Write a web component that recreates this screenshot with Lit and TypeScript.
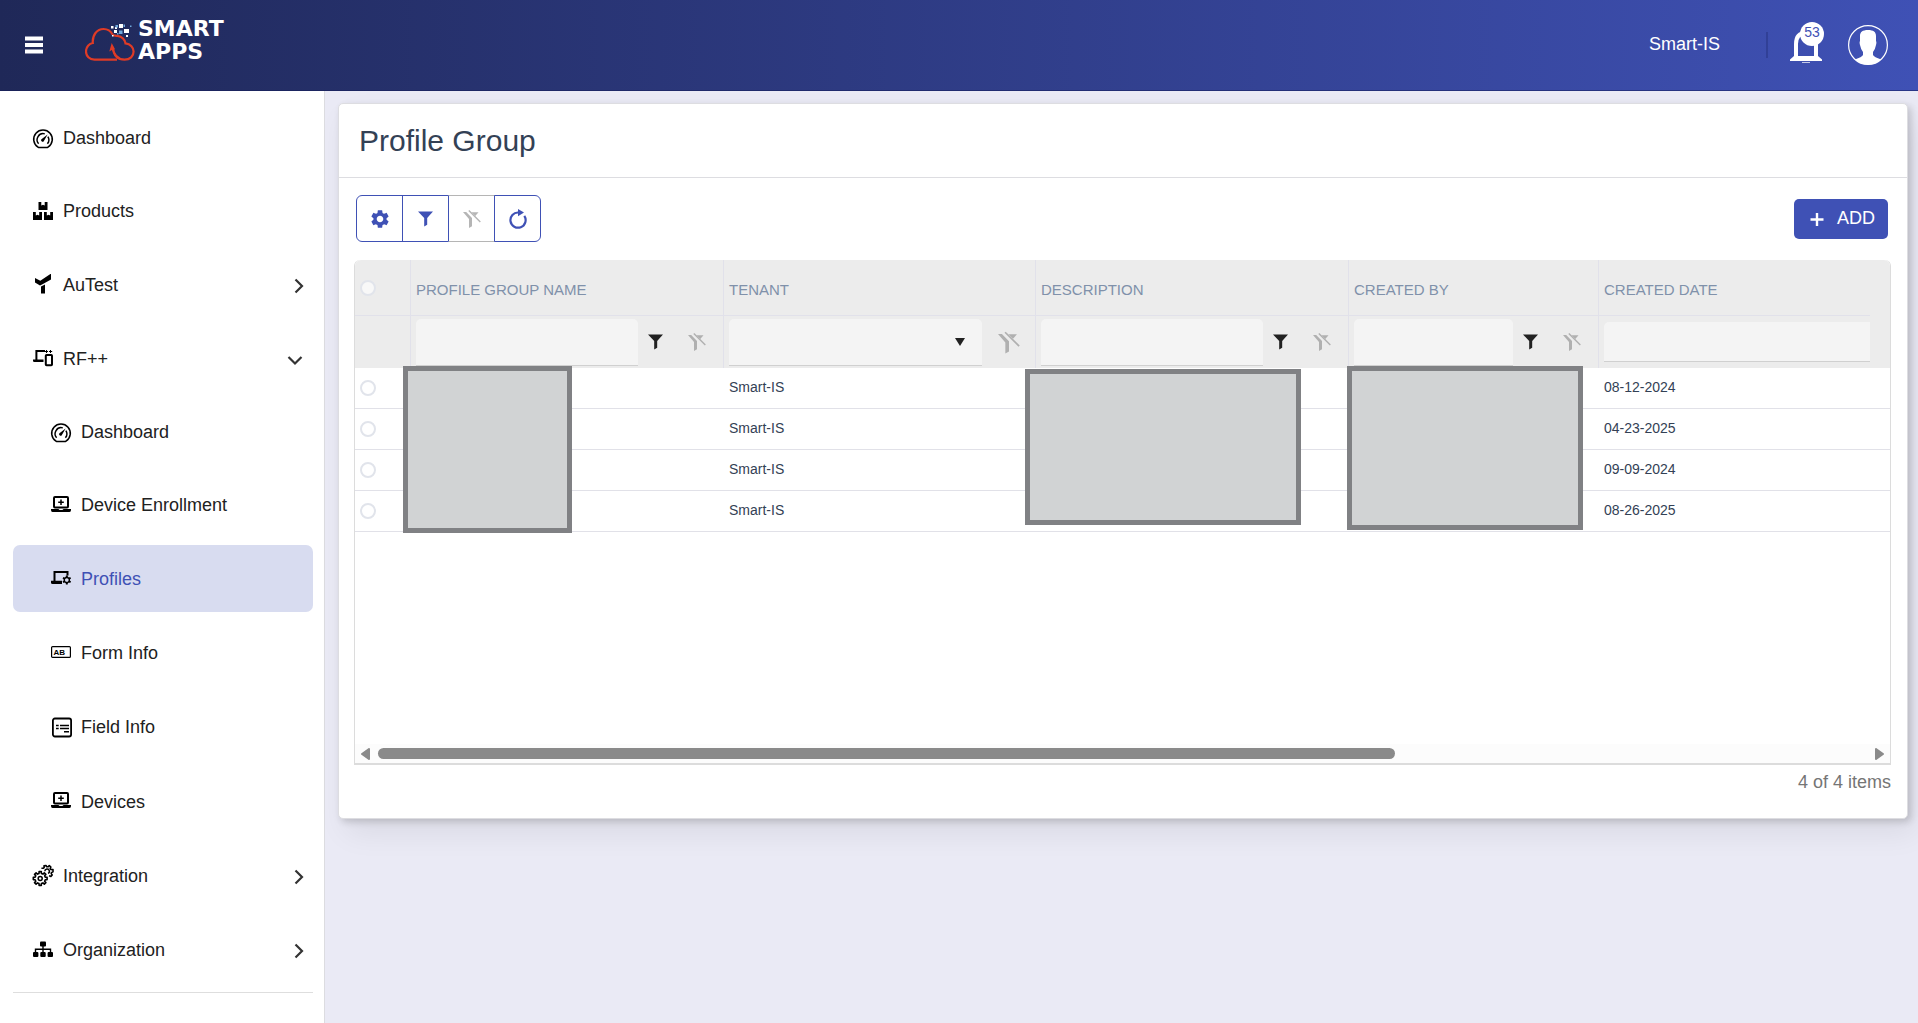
import { LitElement, html, svg, css, nothing, type TemplateResult } from "lit";
import { customElement, property, state } from "lit/decorators.js";
import { classMap } from "lit/directives/class-map.js";

/* Outline of a toothed wheel centred on (cx, cy). */
function gearPath(cx: number, cy: number, outer: number, inner: number, teeth: number): string {
  const points: string[] = [];
  const step = (Math.PI * 2) / teeth;
  for (let i = 0; i < teeth; i++) {
    const a = i * step - Math.PI / 2;
    const corners: [number, number][] = [
      [a - step * 0.3, inner],
      [a - step * 0.2, outer],
      [a + step * 0.2, outer],
      [a + step * 0.3, inner],
    ];
    for (const [angle, r] of corners) {
      points.push(`${(cx + Math.cos(angle) * r).toFixed(2)} ${(cy + Math.sin(angle) * r).toFixed(2)}`);
    }
  }
  return `M${points.join("L")}Z`;
}

const icons: Record<string, TemplateResult> = {
  gauge: svg`
    <path d="M5 19.200A9.300 9.300 0 1 1 15 19.200Q14.500 19.600 13.500 19.600H6.500Q5.500 19.600 5 19.200Z" fill="none" stroke="currentColor" stroke-width="1.500"/>
    <path d="M5.600 15.800A6.100 6.100 0 0 1 11.800 5.900M14.900 8.600A6.100 6.100 0 0 1 14.400 15.800" fill="none" stroke="currentColor" stroke-width="1.500"/>
    <path d="M14.600 6.600L10.900 12.900A1.500 1.500 0 1 1 8.800 10.900Z" fill="currentColor"/>`,
  boxes: svg`
    <path d="M5.500 1H8.300v3.600l1.700-.8 1.700.8V1h2.800v8h-9ZM0 11h2.800v3.600l1.700-.8 1.700.8V11H9v8H0ZM11 11h2.800v3.600l1.700-.8 1.700.8V11H20v8H11Z" fill="currentColor"/>`,
  branch: svg`
    <path d="M2 4L7.300 6.700 17.400 0H18v5.400L9.500 10.300 7 11.400 2 8.500Z" fill="currentColor"/>
    <path d="M8 12.500L12 10.500V19.500H8Z" fill="currentColor"/>`,
  devices: svg`
    <path d="M12 3H3.400V12.500" fill="none" stroke="currentColor" stroke-width="2"/>
    <path d="M0 11.500H10.500V14H1.200Q0 14 0 12.800Z" fill="currentColor"/>
    <rect x="12.800" y="7" width="6.200" height="10.300" rx=".8" fill="none" stroke="currentColor" stroke-width="2"/>
    <path d="M13.500 2v3M12 3.500h3M17.500 2v3M16 3.500h3.200" fill="none" stroke="currentColor" stroke-width="1"/>`,
  laptopPlus: svg`
    <rect x="3" y="2" width="14" height="10.500" rx="1" fill="none" stroke="currentColor" stroke-width="2"/>
    <path d="M10 4.400v5.600M7.200 7.200h5.600" fill="none" stroke="currentColor" stroke-width="1.500"/>
    <path d="M0 14H7.500q.5 1 1.500 1h2q1 0 1.500-1H20v1q0 2-1.500 2H1.500Q0 17 0 15Z" fill="currentColor"/>`,
  laptopGear: svg`
    <path d="M16.500 7.500V4H3.500V13" fill="none" stroke="currentColor" stroke-width="2"/>
    <path d="M0 12.800H11V16H1.500Q0 16 0 14.500Z" fill="currentColor"/>
    <path d="${gearPath(15.800, 12, 4.500, 3.300, 6)}M15.800 10.200a1.800 1.800 0 1 0 .01 0Z" fill="currentColor" fill-rule="evenodd"/>`,
  form: svg`
    <rect x=".6" y="4.600" width="18.800" height="10.800" rx="1" fill="none" stroke="currentColor" stroke-width="1.200"/>
    <text x="2.600" y="12.800" font-size="8" font-weight="700" fill="currentColor" font-family="Liberation Sans, Arial, sans-serif">AB</text>`,
  list: svg`
    <rect x="1.900" y="2.500" width="18.200" height="18" rx="2" fill="none" stroke="currentColor" stroke-width="1.800"/>
    <path d="M5 9.500h2.700M9 9.500h9M5 12.500h2.700M9 12.500h9M13 15.700h5" fill="none" stroke="currentColor" stroke-width="1.500"/>`,
  gears: svg`
    <path d="${gearPath(7.200, 13.500, 7, 5.200, 8)}" fill="none" stroke="currentColor" stroke-width="1.600" stroke-linejoin="round"/>
    <circle cx="7.200" cy="13.500" r="2" fill="none" stroke="currentColor" stroke-width="1.500"/>
    <path d="M8.400 3.200L10.400 3.300 11.200 2.400 11 .8 13 .5 13.800 1.800 15.200 1.600 16.300.6 17.900 2 17.200 3.400 17.900 4.500 20 4.600V6.800L18.500 7.400 18.200 8.600 19.200 10 17.900 11.400 16 10.800" fill="none" stroke="currentColor" stroke-width="1.600" stroke-linejoin="round"/>
    <path d="M11.800 6.200A2.300 2.300 0 1 1 15 8.400" fill="none" stroke="currentColor" stroke-width="1.500"/>`,
  sitemap: svg`
    <rect x="7" y="2.500" width="6" height="5" rx="1" fill="currentColor"/>
    <path d="M2.500 13V10.300H17.500V13M10 6v7" fill="none" stroke="currentColor" stroke-width="1.400"/>
    <rect x="0" y="13" width="5.400" height="5" rx="1" fill="currentColor"/>
    <rect x="7.300" y="13" width="5.400" height="5" rx="1" fill="currentColor"/>
    <rect x="14.600" y="13" width="5.400" height="5" rx="1" fill="currentColor"/>`,
};

const funnelIcon = html`<svg class="funnel" viewBox="0 0 16 16" aria-hidden="true">
  <path d="M0 0H16L9.800 7V14.200L6.600 16V7Z" fill="currentColor"/>
</svg>`;

const funnelClearIcon = html`<svg class="funnel-clear" viewBox="0 0 18 18" aria-hidden="true">
  <path d="M0 2H3.200L9 8V16.300L6 18V9Z" fill="currentColor"/>
  <path d="M8.500 2.200H15.500L12.300 5.900Z" fill="currentColor"/>
  <path d="M5.800.6L17.300 12" fill="none" stroke="currentColor" stroke-width="1.400"/>
</svg>`;

interface NavEntry {
  label: string;
  icon: string;
  size: 20 | 21 | 22;
  sub?: boolean;
  active?: boolean;
  arrow?: "right" | "down";
}

const navigation: NavEntry[] = [
  { label: "Dashboard", icon: "gauge", size: 20 },
  { label: "Products", icon: "boxes", size: 20 },
  { label: "AuTest", icon: "branch", size: 21, arrow: "right" },
  { label: "RF++", icon: "devices", size: 21, arrow: "down" },
  { label: "Dashboard", icon: "gauge", size: 20, sub: true },
  { label: "Device Enrollment", icon: "laptopPlus", size: 20, sub: true },
  { label: "Profiles", icon: "laptopGear", size: 21, sub: true, active: true },
  { label: "Form Info", icon: "form", size: 21, sub: true },
  { label: "Field Info", icon: "list", size: 22, sub: true },
  { label: "Devices", icon: "laptopPlus", size: 21, sub: true },
  { label: "Integration", icon: "gears", size: 21, arrow: "right" },
  { label: "Organization", icon: "sitemap", size: 21, arrow: "right" },
];

const fontStack = css`"Liberation Sans", Arial, sans-serif`;

@customElement("app-header")
export class AppHeader extends LitElement {
  @property() tenant = "";
  @property({ type: Number }) notices = 0;

  static styles = css`
    :host {
      display: block;
      font-family: ${fontStack};
      color: #fff;
    }
    .bar {
      display: flex;
      align-items: center;
      box-sizing: border-box;
      height: 91px;
      padding: 0 30px 0 24px;
      border-bottom: 1px solid rgba(20, 28, 90, 0.5);
      background: linear-gradient(to right, #1f2858, #3f51b5);
    }
    button {
      display: flex;
      padding: 0;
      border: 0;
      background: none;
      color: inherit;
      font: inherit;
      cursor: pointer;
    }
    .menu {
      margin-right: 41px;
      margin-bottom: 1px;
    }
    .logo {
      display: flex;
      align-items: center;
      gap: 3px;
      height: 46px;
      margin-bottom: 10px;
      color: #fff;
      text-decoration: none;
      font: 700 22px/23px "DejaVu Sans", Verdana, sans-serif;
    }
    .words {
      display: flex;
      flex-direction: column;
    }
    .tenant {
      margin-left: auto;
      margin-bottom: 3px;
      font-size: 18px;
      line-height: 22px;
    }
    .divider {
      width: 2px;
      height: 26px;
      margin: 0 22px 0 46px;
      background: rgba(30, 40, 110, 0.35);
    }
    .bell {
      position: relative;
      width: 34px;
      margin-right: 24px;
    }
    .badge {
      position: absolute;
      right: 0;
      top: -5px;
      width: 24px;
      height: 24px;
      border-radius: 12px;
      background: #fff;
      color: #3f51b5;
      font-size: 14px;
      line-height: 21px;
      text-align: center;
    }
  `;

  render() {
    return html`<header class="bar">
      <button class="menu" aria-label="Toggle menu">
        <svg width="20" height="18" viewBox="0 0 20 18" aria-hidden="true">
          <path d="M1 2.500H19M1 9H19M1 15.500H19" stroke="#fff" stroke-width="4" />
        </svg>
      </button>
      <a class="logo" href="#home">
        <svg width="50" height="42" viewBox="0 0 50 42" aria-hidden="true">
          <path
            d="M32 40.600H9.500C4.500 40.600 1 36.800 1 32.500C1 28 4.200 24.500 7.800 24C7.200 16 12 10 18.500 10C22.500 10 26 12.500 27.500 15.500"
            fill="none" stroke="#df3b26" stroke-width="2.200" />
          <path
            d="M27.500 15.500Q29 17 32.500 16.800C36.500 17.500 40 20.500 40.500 24.400C45.500 25 48.600 28.600 48.600 32.600C48.600 37.200 45 40.600 39.600 40.600C33 40.600 28.600 36 27.600 28"
            fill="none" stroke="#df3b26" stroke-width="2.200" />
          <path d="M26.700 24L24.300 32.500 27.200 30.700 29.500 37 31 36.500 28.600 30.600 30 30.300Z" fill="#df3b26" />
          <path
            d="M34 5h4v4h-4ZM39 10h5v4h-5ZM29 11h3v3h-3ZM30 8h2v2h-2ZM26 7h2.500v2.500H26ZM41 16h2v2h-2ZM27 16h1.500v1.500H27Z"
            fill="#fff" />
          <path
            d="M30.500 6h2.500v2.500h-2.500ZM34 11.500h3.500v3.500H34ZM38.500 5.500h1.500V8h-1.500ZM45 6.500h1.500V8H45ZM32 14h1.500v1.500H32Z"
            fill="#6fa8dc" />
        </svg>
        <span class="words"><span>SMART</span><span>APPS</span></span>
      </a>
      <span class="tenant">${this.tenant}</span>
      <span class="divider"></span>
      <button class="bell" aria-label="Notifications">
        <svg width="34" height="36" viewBox="0 0 34 36" aria-hidden="true">
          <path d="M6 30V17C6 10 9 6 16 6S26 10 26 17V30" fill="none" stroke="#fff" stroke-width="4" />
          <path d="M4 29H28L32 32.500V34H0V32.500Z" fill="#fff" />
          <path d="M12 35.500H20" stroke="#fff" stroke-opacity=".7" stroke-width="1" />
        </svg>
        <span class="badge">${this.notices}</span>
      </button>
      <button class="avatar" aria-label="Account">
        <svg width="40" height="40" viewBox="0 0 40 40" aria-hidden="true">
          <circle cx="20" cy="20" r="19.400" fill="none" stroke="#fff" stroke-width="1.200" />
          <path
            d="M20 5C25.500 5 28 7 28 11V16Q28.800 17 28 20Q27 25 25 27V30Q26 32 33.200 34.600A19.500 19.500 0 0 1 6.800 34.600Q14 32 15 30V27Q13 25 12 20Q11.200 17 12 16V11C12 7 14.500 5 20 5Z"
            fill="#fff" />
        </svg>
      </button>
    </header>`;
  }
}

@customElement("app-sidebar")
export class AppSidebar extends LitElement {
  static styles = css`
    :host {
      display: block;
      box-sizing: border-box;
      padding: 14px 11px 0 13px;
      border-right: 1px solid #dcdce0;
      background: #fff;
      font: 18px/20px ${fontStack};
    }
    .items {
      display: flex;
      flex-direction: column;
      gap: 7px;
      margin: 0;
      padding: 0 0 9px;
      border-bottom: 1px solid #dedede;
      list-style: none;
    }
    .item {
      display: flex;
      align-items: center;
      gap: 10px;
      padding: 23px 10px 23px 20px;
      border-radius: 7px;
      color: #212121;
      text-decoration: none;
    }
    .sub {
      padding-left: 38px;
    }
    .active {
      background: #d8dcf0;
      color: #3f51b5;
    }
    .icon {
      width: 20px;
      color: #000;
      overflow: visible;
    }
    .arrow {
      margin-left: auto;
      overflow: visible;
    }
  `;

  render() {
    return html`<nav aria-label="Main">
      <ul class="items">
        ${navigation.map(
          (entry) => html`<li>
            <a
              class=${classMap({ item: true, sub: !!entry.sub, active: !!entry.active })}
              href="#${entry.label.toLowerCase().replace(/\W+/g, "-")}"
            >
              <svg class="icon" height=${entry.size} viewBox="0 0 20 ${entry.size}" aria-hidden="true">
                ${icons[entry.icon]}
              </svg>
              <span>${entry.label}</span>
              ${entry.arrow
                ? html`<svg class="arrow" width="16" height="16" viewBox="0 0 16 16" aria-hidden="true">
                    <path
                      d=${entry.arrow === "right" ? "M8.500 2.500L15 9 8.500 15.500" : "M1.500 6L8 12.500 14.500 6"}
                      fill="none" stroke="#333" stroke-width="2.200" />
                  </svg>`
                : nothing}
            </a>
          </li>`,
        )}
      </ul>
    </nav>`;
  }
}

interface GroupRow {
  tenant: string;
  created: string;
}

@customElement("profile-group-page")
export class ProfileGroupPage extends LitElement {
  @state() private rows: GroupRow[] = [
    { tenant: "Smart-IS", created: "08-12-2024" },
    { tenant: "Smart-IS", created: "04-23-2025" },
    { tenant: "Smart-IS", created: "09-09-2024" },
    { tenant: "Smart-IS", created: "08-26-2025" },
  ];

  static styles = css`
    :host {
      display: block;
      border: 1px solid #dddde1;
      border-radius: 5px;
      background: #fff;
      box-shadow: 3px 3px 7px rgba(0, 0, 0, 0.16), 8px 14px 30px rgba(0, 0, 0, 0.07);
      font-family: ${fontStack};
      color: #334155;
    }
    h1 {
      margin: 0;
      padding: 20px 20px 19px;
      border-bottom: 1px solid #dddde1;
      font-size: 30px;
      font-weight: 400;
      line-height: 34px;
    }
    .content {
      padding: 17px 16px 26px 15px;
    }
    button {
      padding: 0;
      border: 0;
      background: none;
      font: inherit;
      cursor: pointer;
    }
    svg {
      display: block;
    }
    .toolbar {
      display: flex;
      align-items: center;
      justify-content: space-between;
      padding: 0 3px 18px 2px;
    }
    .tools {
      display: flex;
    }
    .tool {
      display: flex;
      align-items: center;
      justify-content: center;
      box-sizing: border-box;
      width: 47px;
      height: 47px;
      border: 1px solid #3f51b5;
      color: #3f51b5;
    }
    .tool + .tool {
      margin-left: -1px;
    }
    .tool:first-child {
      border-radius: 6px 0 0 6px;
    }
    .tool:last-child {
      border-radius: 0 6px 6px 0;
    }
    .tool:disabled {
      border-color: #b5b5b5;
      border-left-color: #3f51b5;
      color: #b5b5b5;
    }
    .add {
      display: flex;
      align-items: center;
      gap: 13px;
      height: 40px;
      padding: 0 13px 0 16px;
      border-radius: 5px;
      background: #3f51b5;
      color: #fff;
      font-size: 18px;
      line-height: 36px;
    }
    .add span {
      padding-bottom: 2px;
    }
    .grid {
      position: relative;
      border: 1px solid #dcdcdc;
      border-top: 0;
      border-bottom-width: 2px;
      border-radius: 6px 6px 0 0;
    }
    .viewport {
      min-height: 484px;
    }
    table {
      width: 100%;
      table-layout: fixed;
      border-collapse: separate;
      border-spacing: 0;
    }
    .col-select {
      width: 56px;
    }
    .col-wide {
      width: 313px;
    }
    .col-tenant {
      width: 312px;
    }
    .col-author {
      width: 250px;
    }
    .col-gutter {
      width: 20px;
    }
    th,
    td {
      box-sizing: border-box;
      padding: 0 0 0 5px;
      text-align: left;
      font-weight: 400;
    }
    thead th {
      height: 56px;
      border-right: 1px solid #e1e1ea;
      border-bottom: 1px solid #e1e1ea;
      background: #ececec;
      color: #8091aa;
      font-size: 15px;
      line-height: 20px;
      padding-top: 4px;
    }
    thead th:first-child {
      padding-top: 0;
      border-top-left-radius: 6px;
    }
    thead th.date,
    thead td.date {
      border-right: 0;
    }
    thead th.gutter {
      border: 0;
      border-top-right-radius: 6px;
    }
    thead td {
      height: 52px;
      border-right: 1px solid #e1e1ea;
      background: #ececec;
    }
    thead td.gutter {
      border: 0;
    }
    tbody td {
      height: 41px;
      border-bottom: 1px solid #e1e1e8;
      font-size: 14px;
      line-height: 20px;
      padding-bottom: 3px;
    }
    .pick {
      display: block;
      appearance: none;
      box-sizing: border-box;
      width: 16px;
      height: 16px;
      margin: 0;
      border: 2px solid #e1e4eb;
      border-radius: 8px;
    }
    thead .pick {
      background: #f8f8f8;
    }
    tbody .pick {
      margin-top: 2px;
    }
    .filter {
      display: flex;
      align-items: center;
      gap: 6px;
      padding-right: 9px;
    }
    .field {
      flex: 1;
      box-sizing: border-box;
      width: 100%;
      min-width: 0;
      height: 47px;
      border: 0;
      border-bottom: 1px solid #d0d0d0;
      border-radius: 5px 5px 0 0;
      background: #f4f4f4;
      padding: 0 12px;
      font: 14px/20px ${fontStack};
      color: #334155;
    }
    .filter .field:first-child {
      margin-right: -6px;
    }
    .short {
      display: block;
      height: 40px;
      border-radius: 5px 0 0 0;
    }
    .choice {
      position: relative;
      display: flex;
      flex: 1;
      margin-right: 3px;
    }
    .choice .field {
      appearance: none;
    }
    .filter .choice .field:first-child {
      margin-right: 0;
    }
    .caret {
      position: absolute;
      right: 17px;
      top: 19px;
      pointer-events: none;
    }
    .mini {
      display: flex;
      justify-content: center;
      align-items: center;
      width: 35px;
      height: 36px;
      color: #212121;
    }
    .mini:disabled {
      color: #b0b0b0;
    }
    .funnel {
      width: 15px;
      height: 16px;
    }
    .funnel-clear {
      width: 18px;
      height: 18px;
    }
    .choice + .mini .funnel-clear {
      width: 22px;
      height: 23px;
    }
    .mask {
      position: absolute;
      box-sizing: border-box;
      border: 5px solid #808184;
      background: #d1d3d4;
    }
    .mask-name {
      left: 48px;
      top: 106px;
      width: 169px;
      height: 167px;
    }
    .mask-description {
      left: 670px;
      top: 109px;
      width: 276px;
      height: 156px;
    }
    .mask-author {
      left: 992px;
      top: 106px;
      width: 236px;
      height: 164px;
    }
    .scroll {
      display: flex;
      align-items: center;
      gap: 8px;
      height: 19px;
      padding: 0 6px;
      background: #fcfcfc;
      color: #8a8a8a;
    }
    .track {
      flex: 1;
    }
    .thumb {
      height: 11px;
      border-radius: 6px;
      background: #8a8a8a;
    }
    .count {
      margin: 0;
      padding-top: 7px;
      color: #757575;
      font-size: 18px;
      line-height: 20px;
      text-align: right;
    }
  `;

  /* Share of the grid's full width that is in view, in percent. */
  @property({ type: Number }) visibleShare = 68.3;

  private textFilter(name: string) {
    return html`<div class="filter">
      <input class="field" type="text" aria-label="Filter ${name}" />
      <button class="mini" aria-label="Apply ${name} filter">${funnelIcon}</button>
      <button class="mini" aria-label="Clear ${name} filter" disabled>${funnelClearIcon}</button>
    </div>`;
  }

  render() {
    return html`
      <h1>Profile Group</h1>
      <div class="content">
        <div class="toolbar">
          <div class="tools">
            <button class="tool" aria-label="Settings">
              <svg width="22" height="22" viewBox="0 0 24 24" aria-hidden="true">
                <path
                  d="M19.140 12.940c.04-.3.06-.61.06-.94 0-.32-.02-.64-.07-.94l2.030-1.580c.18-.14.23-.41.12-.61l-1.920-3.320c-.12-.22-.37-.29-.59-.22l-2.390.96c-.5-.38-1.030-.7-1.620-.94l-.36-2.540c-.04-.24-.24-.41-.48-.41h-3.840c-.24 0-.43.17-.47.41l-.36 2.540c-.59.24-1.130.57-1.620.94l-2.390-.96c-.22-.08-.47 0-.59.22L2.740 8.870c-.12.21-.08.47.12.61l2.030 1.580c-.05.3-.09.63-.09.94s.02.64.07.94l-2.030 1.580c-.18.14-.23.41-.12.61l1.920 3.320c.12.22.37.29.59.22l2.390-.96c.5.38 1.030.7 1.620.94l.36 2.540c.05.24.24.41.48.41h3.840c.24 0 .44-.17.47-.41l.36-2.540c.59-.24 1.130-.56 1.620-.94l2.390.96c.22.08.47 0 .59-.22l1.920-3.320c.12-.22.07-.47-.12-.61l-2.010-1.580zM12 15.600c-1.980 0-3.600-1.620-3.600-3.600s1.620-3.600 3.600-3.600 3.600 1.620 3.600 3.600-1.620 3.600-3.600 3.600z"
                  fill="currentColor" />
              </svg>
            </button>
            <button class="tool" aria-label="Filter">${funnelIcon}</button>
            <button class="tool" aria-label="Clear filter" disabled>${funnelClearIcon}</button>
            <button class="tool" aria-label="Refresh">
              <svg width="20" height="20" viewBox="0 0 20 20" aria-hidden="true">
                <path d="M10.500 3.500A7.600 7.600 0 1 0 16.300 6.800" fill="none" stroke="currentColor" stroke-width="2.200" />
                <path d="M10 0L16 3.600 10 7.200Z" fill="currentColor" />
              </svg>
            </button>
          </div>
          <button class="add">
            <svg width="14" height="14" viewBox="0 0 14 14" aria-hidden="true">
              <path d="M7 1V14M.5 7.500H13.500" stroke="#fff" stroke-width="2.400" />
            </svg>
            <span>ADD</span>
          </button>
        </div>
        <div class="grid">
          <div class="viewport">
            <table>
              <colgroup>
                <col class="col-select" />
                <col class="col-wide" />
                <col class="col-tenant" />
                <col class="col-wide" />
                <col class="col-author" />
                <col />
                <col class="col-gutter" />
              </colgroup>
              <thead>
                <tr>
                  <th><input class="pick" type="radio" name="group" aria-label="Select none" /></th>
                  <th scope="col">PROFILE GROUP NAME</th>
                  <th scope="col">TENANT</th>
                  <th scope="col">DESCRIPTION</th>
                  <th scope="col">CREATED BY</th>
                  <th scope="col" class="date">CREATED DATE</th>
                  <th class="gutter"></th>
                </tr>
                <tr>
                  <td></td>
                  <td>${this.textFilter("profile group name")}</td>
                  <td>
                    <div class="filter">
                      <div class="choice">
                        <select class="field" aria-label="Filter tenant">
                          <option></option>
                          <option>Smart-IS</option>
                        </select>
                        <svg class="caret" width="10" height="8" viewBox="0 0 10 8" aria-hidden="true">
                          <path d="M0 0H10L5 8Z" fill="#212121" />
                        </svg>
                      </div>
                      <button class="mini" aria-label="Clear tenant filter" disabled>${funnelClearIcon}</button>
                    </div>
                  </td>
                  <td>${this.textFilter("description")}</td>
                  <td>${this.textFilter("created by")}</td>
                  <td class="date"><input class="field short" type="text" aria-label="Filter created date" /></td>
                  <td class="gutter"></td>
                </tr>
              </thead>
              <tbody>
                ${this.rows.map(
                  (row) => html`<tr>
                    <td><input class="pick" type="radio" name="group" aria-label="Select group" /></td>
                    <td></td>
                    <td>${row.tenant}</td>
                    <td></td>
                    <td></td>
                    <td colspan="2">${row.created}</td>
                  </tr>`,
                )}
              </tbody>
            </table>
          </div>
          <div class="mask mask-name"></div>
          <div class="mask mask-description"></div>
          <div class="mask mask-author"></div>
          <div class="scroll">
            <svg width="9" height="12" viewBox="0 0 9 12" aria-hidden="true">
              <path d="M8 1V11L1 6Z" fill="currentColor" stroke="currentColor" stroke-width="2" stroke-linejoin="round" />
            </svg>
            <div class="track"><div class="thumb" style="width: ${this.visibleShare}%"></div></div>
            <svg width="9" height="12" viewBox="0 0 9 12" aria-hidden="true">
              <path d="M1 1V11L8 6Z" fill="currentColor" stroke="currentColor" stroke-width="2" stroke-linejoin="round" />
            </svg>
          </div>
        </div>
        <p class="count">${this.rows.length} of ${this.rows.length} items</p>
      </div>
    `;
  }
}

@customElement("app-root")
export class AppRoot extends LitElement {
  static styles = css`
    :host {
      display: flex;
      flex-direction: column;
      min-height: 100vh;
      background: #eaeaf5;
    }
    .body {
      display: flex;
      flex: 1;
    }
    .side {
      flex: none;
      width: 325px;
    }
    .main {
      flex: 1;
      min-width: 0;
      padding: 12px 10px 24px 13px;
    }
  `;

  render() {
    return html`
      <app-header tenant="Smart-IS" notices="53"></app-header>
      <div class="body">
        <app-sidebar class="side"></app-sidebar>
        <main class="main"><profile-group-page></profile-group-page></main>
      </div>
    `;
  }
}
